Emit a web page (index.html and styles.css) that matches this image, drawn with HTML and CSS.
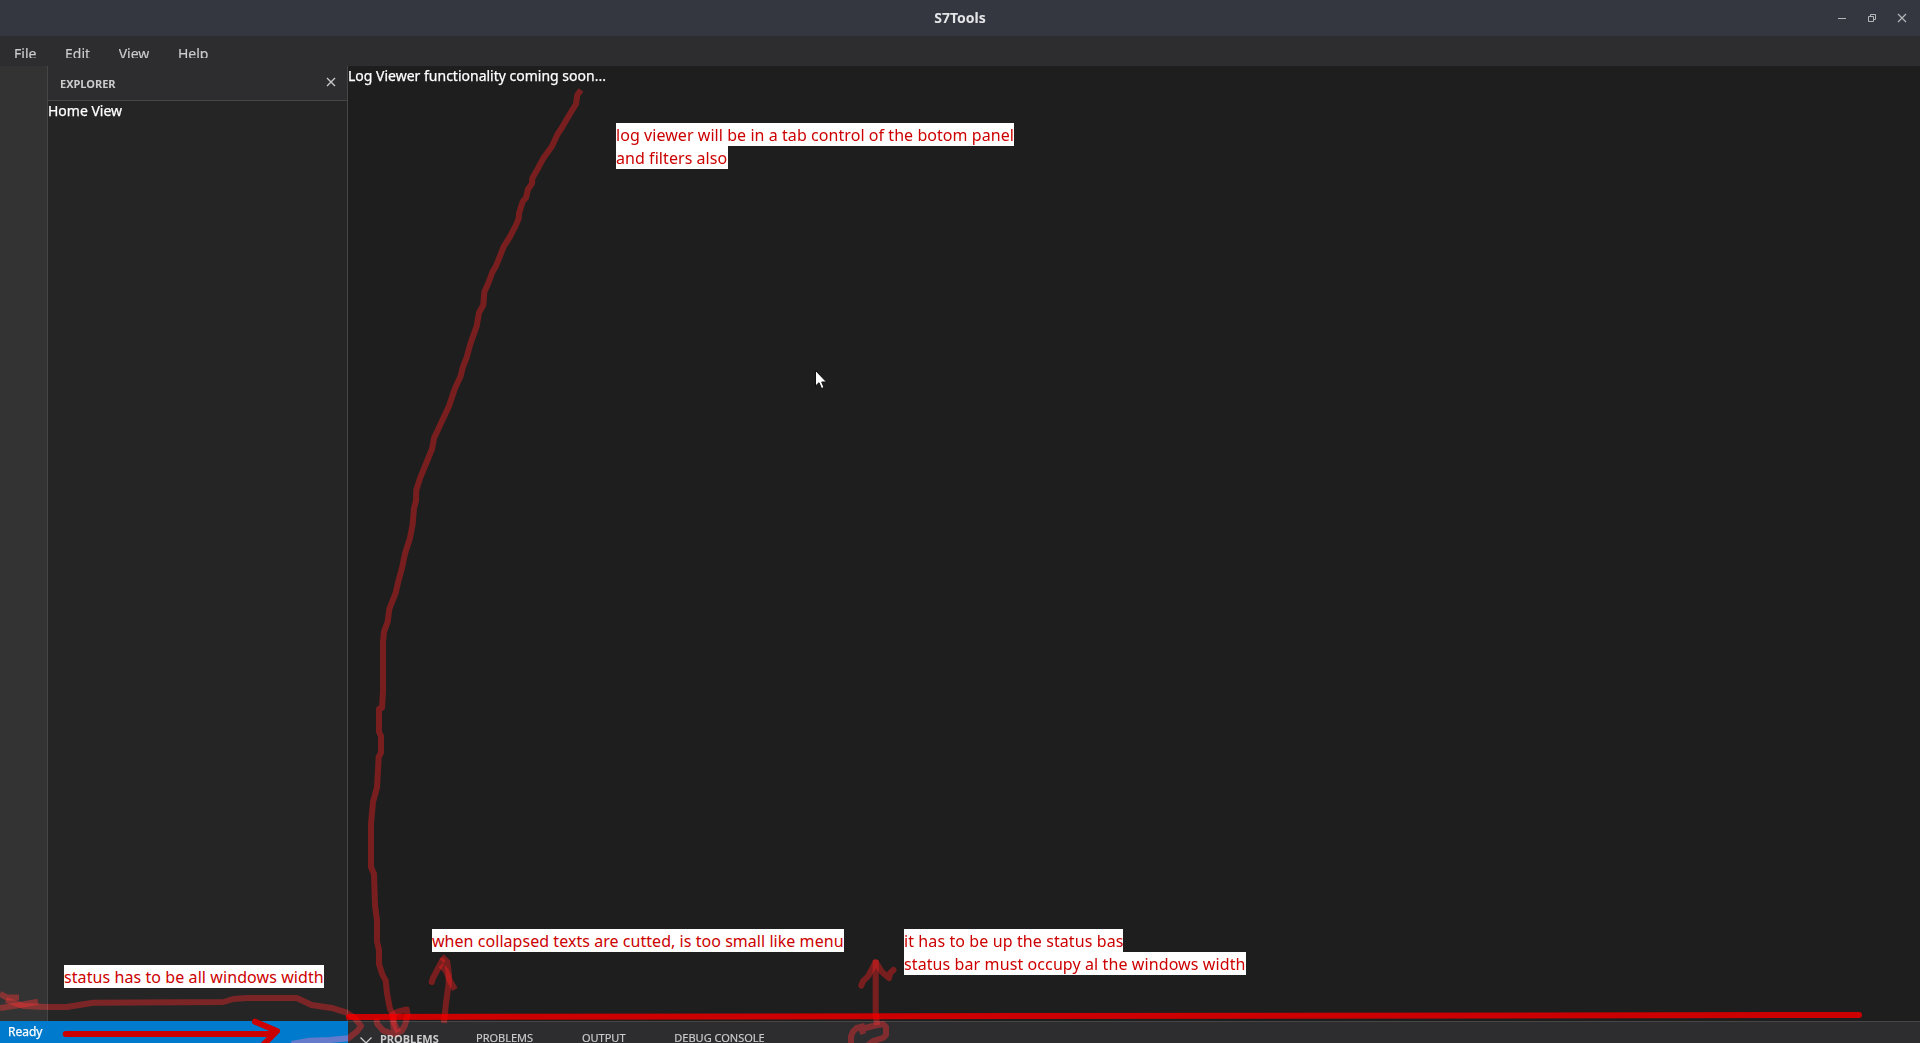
FILE: index.html
```html
<!DOCTYPE html>
<html lang="en">
<head>
<meta charset="utf-8">
<title>S7Tools</title>
<link rel="stylesheet" href="styles.css">
</head>
<body>
<div class="window">
  <header class="titlebar">
    <h1 class="title">S7Tools</h1>
    <svg class="controls" width="72" height="12" viewBox="0 0 72 12" fill="none" stroke="#b4b6b8">
      <path d="M1 6.500H9"/>
      <path d="M31.500 4.500H36.500V9.500H31.500ZM33.500 4.500V2.500H38.500V7.500H36.500"/>
      <path d="M61 2L69 10M69 2L61 10" stroke-width="1.200"/>
    </svg>
  </header>
  <nav class="menubar">
    <span>File</span><span>Edit</span><span>View</span><span>Help</span>
  </nav>
  <div class="workspace">
    <div class="left">
      <div class="left-top">
        <div class="activity"></div>
        <aside class="sidebar">
          <div class="sidebar-head">
            <span>EXPLORER</span>
            <svg width="10" height="10" viewBox="0 0 10 10" stroke="#cccccc" stroke-width="1.300"><path d="M1 1L9 9M9 1L1 9"/></svg>
          </div>
          <div class="sidebar-body">Home View</div>
        </aside>
      </div>
      <footer class="status">Ready</footer>
    </div>
    <div class="right">
      <main class="editor">Log Viewer functionality coming soon...</main>
      <section class="panel">
        <svg class="chevron" width="12" height="7" viewBox="0 0 12 7" fill="none" stroke="#cccccc" stroke-width="1.300"><path d="M.5 .5L6 6L11.500 .5"/></svg>
        <span class="panel-title">PROBLEMS</span>
        <div class="tabs"><span>PROBLEMS</span><span>OUTPUT</span><span>DEBUG CONSOLE</span></div>
      </section>
    </div>
  </div>
</div>

<svg class="overlay" width="1920" height="1043" viewBox="0 0 1920 1043">
  <path class="solid" d="M349 1017L1859 1015"/>
  <path class="solid" d="M65.700 1034H269L277 1031M255 1021.700L277 1031L264 1044"/>
</svg>
<svg class="overlay marker" width="1920" height="1043" viewBox="0 0 1920 1043">
  <path d="M581 90L577.300 95L576 104L566.700 119.300L561.700 128L557.700 134L551.700 146.700L543.300 158.300L538.300 167.700L532.300 178.300L532 183.300L528 189.300L526 197.700L522.700 201.700L519 213.300L518.700 218.300L516 225L510 236.700L503.700 246.700L496 266L492.300 272.300L488.300 283.300L484.300 292L483.300 305L479 312.700L476.700 326L470 345L466.700 357.300L462.700 367.700L460.700 376L455 388.300L449 406L434 438.300L432 449L420 478.300L416.300 490L416 500.700L414 508.300L412.700 524L410 538L405 553.700L401.700 569.300L398.300 581.400L395.700 592.800L389.300 609L387.700 621.900L384 631.600L383 642V692L382 707.800L379 708.800V732L381 736V752.800L378.700 757L377 787.400L373 802L371 823.800V867L374 874L375 905L377 920.700V941.500L379 950V964L382.300 974.400L385.700 980.600L387 993.400L390 1009L393.300 1015L394.300 1023.300L398.300 1032"/>
  <path d="M376.300 1018.300L377.300 1024L383.300 1030.700L393.300 1034L401.700 1031L405 1025L407.700 1015L406.700 1009.500L398 1011.700L392 1015L394 1030L399 1036"/>
  <path d="M444 1023L446 1003L448.500 985L449 975L447.300 962L441.700 956.500"/>
  <path class="round" d="M431.700 982L433 978L442 961"/>
  <path d="M441 965L446 971L450 981L455 989.500"/>
  <path d="M875.700 960V1013L877 1025"/>
  <path class="round" d="M861.300 985.700L862.700 981.700L868.300 976L875.700 962L881.700 971.700L889 978L890 973.300L893.500 970"/>
  <path d="M863.300 1034L861.500 1029L873 1026L883 1024L886 1027V1035L883 1038L873 1041L868 1045M865 1026L856.700 1028L853 1031.700L851 1036.700V1045"/>
  <path d="M6 1000L23.300 1006L46.700 1007H66.700L93.300 1002.700L223.300 1002L233.300 999L246.700 998H296.700L311.700 1005L333.300 1008.300L346.700 1012.700L355 1018.300L361 1026L356.700 1031.700L348.300 1038.300L330 1040L310 1040.700L291.700 1044"/>
  <path d="M0 1008L20 1005L38 1001.700"/>
  <path d="M0 994L7 997.500H19"/>
</svg>
<p class="note note-log">log viewer will be in a tab control of the botom panel<br>and filters also</p>
<p class="note note-status">status has to be all windows width</p>
<p class="note note-cut">when collapsed texts are cutted, is too small like menu</p>
<p class="note note-up">it has to be up the status bas<br>status bar must occupy al the windows width</p>
<svg class="cursor" width="14" height="22" viewBox="0 0 14 22"><path d="M.5 .5V16L4 12.700L6.500 18.500L9 17.500L6.700 12H11.500Z" fill="#fff" stroke="#111"/></svg>
</body>
</html>
```
FILE: styles.css
```css
* { box-sizing: border-box; }
body {
  margin: 0;
  overflow: hidden;
  background: #1e1e1e;
  color: #fff;
  font: 14px "Noto Sans", sans-serif;
}
.window { display: flex; flex-direction: column; width: 1920px; height: 1043px; overflow: hidden; }
.titlebar {
  display: grid;
  grid-template-columns: 1fr auto 1fr;
  align-items: center;
  height: 36px;
  flex: none;
  background: #343740;
}
.title { grid-column: 2; margin: 0 0 2px; font-size: 14px; font-weight: 700; line-height: 19px; color: #e4e5e6; }
.controls { justify-self: end; margin-right: 11px; }
.menubar {
  display: flex;
  gap: 28.600px;
  flex: none;
  height: 30px;
  padding: 8px 14px;
  background: #2d2d30;
  color: #ccc;
  font-size: 14px;
  line-height: 19px;
}
.menubar span { height: 14px; overflow: hidden; }
.workspace { display: flex; flex: 1; min-height: 0; }
.left { display: flex; flex-direction: column; width: 348px; }
.left-top { display: flex; flex: 1; }
.activity { width: 48px; background: #333; border-right: 1px solid #464647; }
.sidebar { flex: 1; background: #252526; border-right: 1px solid #464647; }
.sidebar-head {
  display: flex;
  justify-content: space-between;
  align-items: flex-start;
  height: 35px;
  padding: 10px 11px 0 12px;
  background: #2d2d30;
  border-bottom: 1px solid #464647;
  color: #ccc;
  font-size: 11px;
  font-weight: 700;
  line-height: 15px;
}
.sidebar-head svg { margin-top: 1px; }
.sidebar-body, .editor { line-height: 19px; }
.sidebar-body, .editor, .status { -webkit-text-stroke: .25px currentColor; }
.status {
  height: 22px;
  padding: 2px 8px;
  background: #007acc;
  font-size: 12px;
  line-height: 17px;
}
.right { display: flex; flex-direction: column; flex: 1; }
.editor { flex: 1; }
.panel {
  display: flex;
  align-items: flex-start;
  height: 22px;
  padding: 8px 0 0 12px;
  overflow: hidden;
  background: #2d2d30;
  border-top: 1px solid #464647;
  color: #ccc;
  font-size: 11px;
  line-height: 15px;
}
.chevron { margin: 7px 8px 0 0; flex: none; }
.panel-title { width: 96px; padding-top: 1px; font-weight: 700; }
.tabs { display: flex; gap: 48.800px; }
.menubar, .tabs { -webkit-text-stroke: .15px currentColor; }
.overlay { position: absolute; left: 0; top: 0; pointer-events: none; }
.overlay path { fill: none; stroke-width: 6; stroke-linejoin: round; }
.overlay .solid { stroke: #c00; stroke-linecap: round; }
.marker { mix-blend-mode: screen; }
.marker path { stroke: #600; mix-blend-mode: screen; }
.marker .round { stroke-linecap: round; }
.note {
  position: absolute;
  width: max-content;
  margin: 0;
  padding-top: 1px;
  color: #c00;
  font-size: 16px;
  line-height: 23px;
  letter-spacing: .08px;
  background: linear-gradient(#fff, #fff) no-repeat 0 0 / 100% 23px;
}
.note-log { left: 616px; top: 123px; letter-spacing: .06px; background-image: linear-gradient(#fff, #fff), linear-gradient(#fff, #fff); background-position: 0 0, 0 23px; background-size: 100% 23px, 112px 23px; }
.note-status { left: 64px; top: 965px; }
.note-cut { left: 432px; top: 929px; letter-spacing: .045px; }
.note-up { left: 904px; top: 929px; letter-spacing: .1px; background-image: linear-gradient(#fff, #fff), linear-gradient(#fff, #fff); background-position: 0 0, 0 23px; background-size: 219px 23px, 100% 23px; }
.cursor { position: absolute; left: 815px; top: 370px; }
```
